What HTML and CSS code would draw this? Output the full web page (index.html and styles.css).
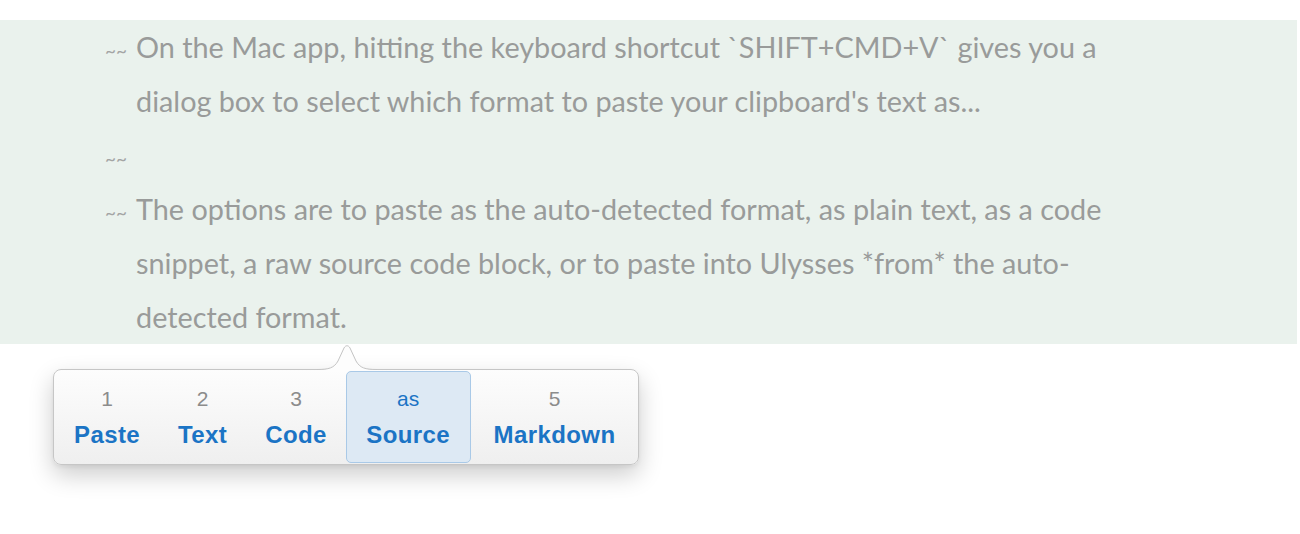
FILE: index.html
```html
<!DOCTYPE html>
<html lang="en">
<head>
    <meta charset="UTF-8">
    <meta name="viewport" content="width=device-width, initial-scale=1.0">
    <title>Ulysses - Paste as</title>
    <link rel="stylesheet" href="styles.css">
</head>
<body>
    <div class="editor">
        <div class="comment-block">
            <p class="line"><span class="mark">~~</span>On the Mac app, hitting the keyboard shortcut `SHIFT+CMD+V` gives you a dialog box to select which format to paste your clipboard's text as...</p>
            <p class="line"><span class="mark">~~</span></p>
            <p class="line"><span class="mark">~~</span>The options are to paste as the auto-detected format, as plain text, as a code snippet, a raw source code block, or to paste into Ulysses *from* the auto-detected format.</p>
        </div>

        <div class="popover">
            <svg class="arrow" width="60" height="28" viewBox="0 0 60 28">
                <path d="M0 26.5 C12 26.5 17 25 21 18 L27 5 C28.5 2 31.5 2 33 5 L39 18 C43 25 48 26.5 60 26.5 L60 28 L0 28 Z" fill="#fdfdfd"/>
                <path d="M0 26.5 C12 26.5 17 25 21 18 L27 5 C28.5 2 31.5 2 33 5 L39 18 C43 25 48 26.5 60 26.5" fill="none" stroke="#c4c4c4" stroke-width="1"/>
            </svg>
            <div class="option">
                <span class="num">1</span>
                <span class="label">Paste</span>
            </div>
            <div class="option">
                <span class="num">2</span>
                <span class="label">Text</span>
            </div>
            <div class="option">
                <span class="num">3</span>
                <span class="label">Code</span>
            </div>
            <div class="option selected">
                <span class="num">as</span>
                <span class="label">Source</span>
            </div>
            <div class="option last">
                <span class="num">5</span>
                <span class="label">Markdown</span>
            </div>
        </div>
    </div>
</body>
</html>
```

FILE: styles.css
```css
html, body {
    margin: 0;
    padding: 0;
    background-color: #fff;
}
body {
    min-height: 534px;
    font-family: Lato, "Open Sans", sans-serif;
}
.editor {
    padding-top: 20px;
    padding-bottom: 60px;
}
.comment-block {
    background-color: #eaf2ed;
    width: 1297px;
}
.line {
    margin: 0;
    padding-left: 136px;
    text-indent: -31px;
    width: 984px;
    font-size: 28.8px;
    line-height: 54px;
    color: #999b9a;
}
.mark {
    display: inline-block;
    width: 31px;
    text-indent: 0;
    font-size: 19px;
    line-height: 20px;
    color: #a3a5a4;
}
.popover {
    position: relative;
    display: inline-flex;
    margin: 25px 0 0 53px;
    padding: 1px 4px 1px 1px;
    border: 1px solid #c6c6c6;
    border-radius: 8px;
    background: linear-gradient(#fdfdfd, #efefef);
    box-shadow: 0 10px 24px rgba(0, 0, 0, 0.2), 0 2px 4px rgba(0, 0, 0, 0.06);
    font-family: "Liberation Sans", Arial, sans-serif;
}
.arrow {
    position: absolute;
    left: 263px;
    top: -27px;
}
.option {
    display: flex;
    flex-direction: column;
    align-items: center;
    padding: 0 18px;
    border: 1px solid transparent;
    border-radius: 5px;
}
.option.last {
    margin-left: 4px;
}
.option.selected {
    padding: 0 19.5px;
    background-color: #dde9f4;
    border-color: #a9c9e7;
}
.num {
    margin-top: 15px;
    font-size: 21px;
    line-height: 24px;
    color: #8c8c8c;
}
.selected .num {
    color: #1b74c5;
}
.label {
    margin: 10px 0 13px;
    font-size: 24px;
    font-weight: bold;
    letter-spacing: 0.4px;
    line-height: 28px;
    color: #1b74c5;
}
```
